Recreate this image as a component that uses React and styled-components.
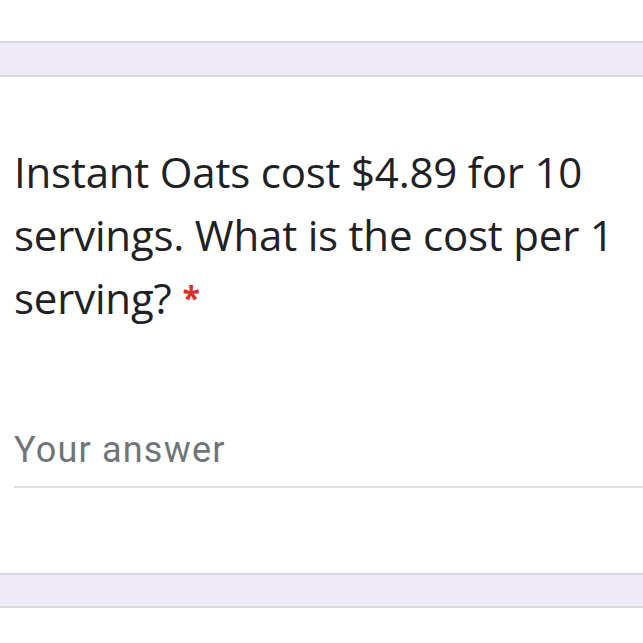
import React from "react";
import styled, { createGlobalStyle } from "styled-components";

const Global = createGlobalStyle`
  body {
    margin: 0;
    background: #ffffff;
  }
`;

const Page = styled.div`
  width: 643px;
  height: 643px;
  overflow: hidden;
  display: flex;
  flex-direction: column;
`;

const Card = styled.div`
  background: #ffffff;
  height: ${({ h }) => h}px;
  flex-shrink: 0;
`;

const Gap = styled.div`
  background: #eeeaf6;
  border-top: 2px solid #d9d8dd;
  border-bottom: 2px solid #d9d8dd;
  height: ${({ h }) => h}px;
  flex-shrink: 0;
`;

const Question = styled.div`
  padding: 63px 14px 0 14px;
  height: 100%;
  box-sizing: border-box;
`;

const Title = styled.div`
  font-family: "Open Sans", "Noto Sans", sans-serif;
  font-size: 42px;
  line-height: 63px;
  color: #202124;
  letter-spacing: -0.2px;
  width: 615px;
`;

const Required = styled.span`
  display: inline-block;
  color: #d93025;
  font-size: 32px;
  font-weight: 700;
  line-height: 32px;
  margin-left: 11px;
  vertical-align: 4px;
`;

const Answer = styled.div`
  margin-top: 100px;
  margin-right: -14px;
  border-bottom: 2px solid #e0e0e0;
  padding-bottom: 15px;
  font-family: Roboto, "Liberation Sans", sans-serif;
  font-size: 36px;
  letter-spacing: 1.2px;
  color: #70757a;
`;

export default function App() {
  return (
    <Page>
      <Global />
      <Card h={41} />
      <Gap h={32} />
      <Card h={496}>
        <Question>
          <Title>
            Instant Oats cost $4.89 for 10 servings. What is the cost per 1
            serving?<Required>*</Required>
          </Title>
          <Answer>Your answer</Answer>
        </Question>
      </Card>
      <Gap h={31} />
      <Card h={40} />
    </Page>
  );
}
